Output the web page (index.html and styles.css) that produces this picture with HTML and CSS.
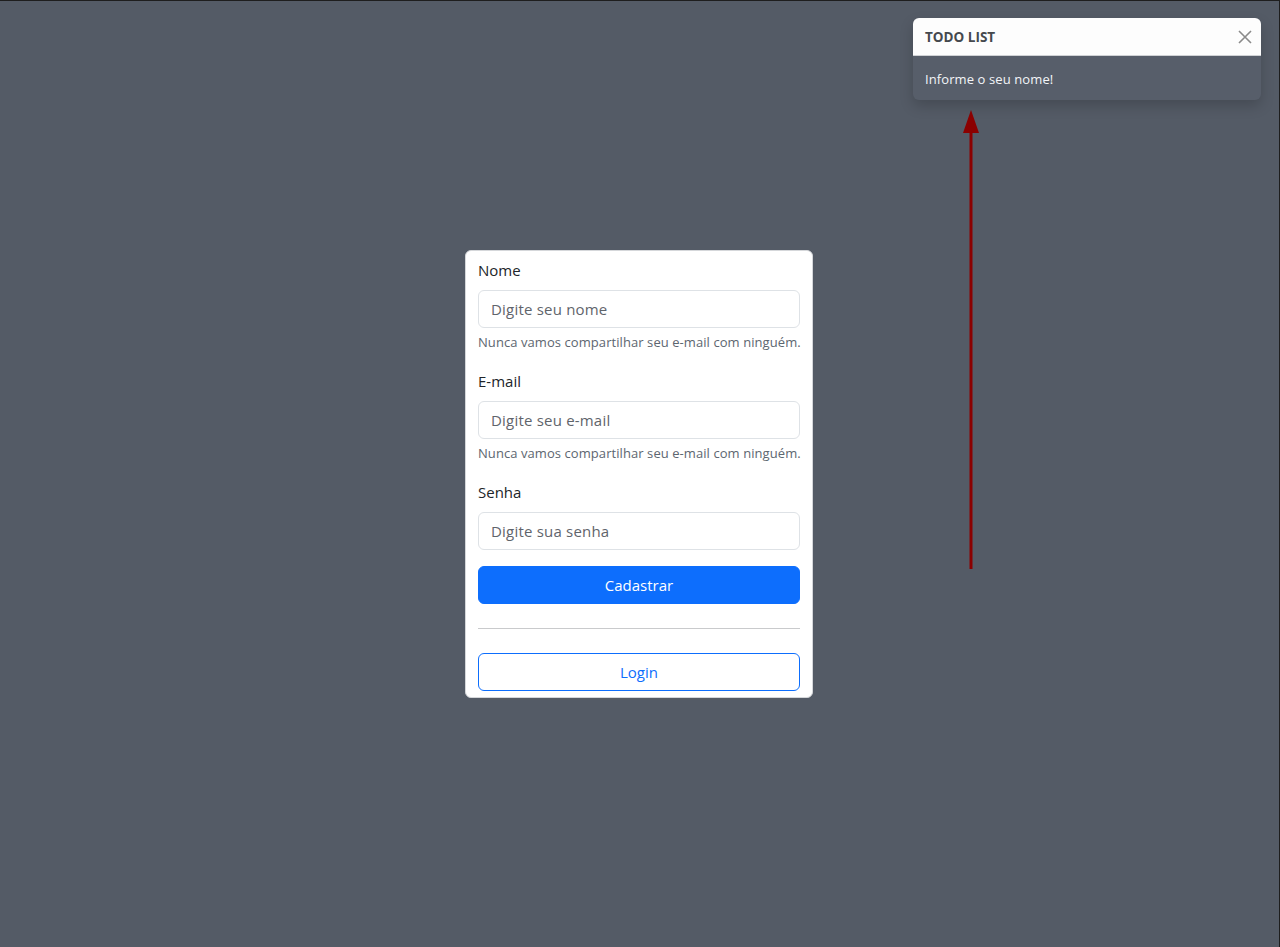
FILE: index.html
```html
<!DOCTYPE html>
<html lang="pt-BR">
<head>
<meta charset="utf-8">
<title>Cadastro</title>
<link rel="stylesheet" href="styles.css">
</head>
<body>
<main class="stage">
  <form class="card">
    <div class="group">
      <label class="label">Nome</label>
      <input class="input" type="text" placeholder="Digite seu nome">
      <div class="help">Nunca vamos compartilhar seu e-mail com ninguém.</div>
    </div>
    <div class="group">
      <label class="label">E-mail</label>
      <input class="input" type="email" placeholder="Digite seu e-mail">
      <div class="help">Nunca vamos compartilhar seu e-mail com ninguém.</div>
    </div>
    <div class="group">
      <label class="label">Senha</label>
      <input class="input" type="password" placeholder="Digite sua senha">
    </div>
    <button type="button" class="btn btn-primary">Cadastrar</button>
    <hr class="divider">
    <button type="button" class="btn btn-outline">Login</button>
  </form>
</main>

<div class="toast">
  <div class="toast-header">
    <strong class="toast-title">TODO LIST</strong>
    <button type="button" class="toast-close" aria-label="Fechar">
      <svg width="14" height="14" viewBox="0 0 14 14"><path d="M1 1 L13 13 M13 1 L1 13" stroke="#8a8a8a" stroke-width="1.6" fill="none"/></svg>
    </button>
  </div>
  <div class="toast-body">Informe o seu nome!</div>
</div>

<svg class="arrow" width="20" height="462" viewBox="0 0 20 462">
  <polygon points="10,0 2,23 18,23" fill="#8b0000"/>
  <rect x="8.5" y="20" width="3" height="439" fill="#8b0000"/>
</svg>
</body>
</html>
```

FILE: styles.css
```css
* { box-sizing: border-box; }
html, body { margin: 0; height: 100%; }
body {
  background: #545b66;
  font-family: "Open Sans", "Noto Sans", sans-serif;
  color: #212529;
  border-top: 1px solid #1e1e1e;
  border-right: 1px solid #1e1e1e;
  overflow: hidden;
}
.stage {
  height: 100%;
  display: flex;
  align-items: center;
  justify-content: center;
  padding-right: 1px;
}
.card {
  width: 348px;
  background: #fff;
  border: 1px solid #d5d7da;
  border-radius: 6px;
  padding: 7px 12px 6px;
  display: flex;
  flex-direction: column;
}
.group { margin-bottom: 16px; display: flex; flex-direction: column; }
.label {
  font-size: 15px;
  line-height: 24px;
  margin-bottom: 8px;
  letter-spacing: 0;
}
.input {
  height: 38px;
  border: 1px solid #dee2e6;
  border-radius: 6px;
  padding: 6px 12px;
  font: inherit;
  font-size: 15px;
  letter-spacing: 0.2px;
  color: #212529;
  outline: none;
}
.input::placeholder { color: #5f646b; opacity: 1; }
.help {
  margin-top: 4px;
  font-size: 13px;
  line-height: 21px;
  color: #5d6670;
  letter-spacing: 0.07px;
  white-space: nowrap;
}
.btn {
  height: 38px;
  border-radius: 6px;
  font: inherit;
  font-size: 15px;
  letter-spacing: 0;
  cursor: pointer;
}
.btn-primary { background: #0d6efd; border: 1px solid #0d6efd; color: #fff; }
.btn-outline { background: #fff; border: 1px solid #0d6efd; color: #0d6efd; }
.divider {
  border: 0;
  border-top: 1px solid #c9cacc;
  margin: 24px 0 24px;
}
.toast {
  position: absolute;
  top: 18px;
  right: 19px;
  width: 348px;
  border-radius: 6px;
  background: #575e6a;
  box-shadow: 0 6px 14px rgba(0,0,0,0.18);
  overflow: hidden;
}
.toast-header {
  height: 38px;
  background: #fdfdfd;
  border-bottom: 1px solid #d0d2d5;
  display: flex;
  align-items: center;
  justify-content: space-between;
  padding: 0 5px 0 12px;
}
.toast-title {
  font-size: 13.5px;
  font-weight: 700;
  color: #45494e;
  letter-spacing: 0;
}
.toast-close {
  background: none;
  border: 0;
  padding: 4px;
  display: flex;
}
.toast-body {
  height: 44px;
  padding: 1px 12px 0;
  display: flex;
  align-items: center;
  font-size: 13px;
  color: #f3f5f8;
  letter-spacing: 0.1px;
}
.arrow {
  position: absolute;
  left: 961px;
  top: 110px;
}
```
